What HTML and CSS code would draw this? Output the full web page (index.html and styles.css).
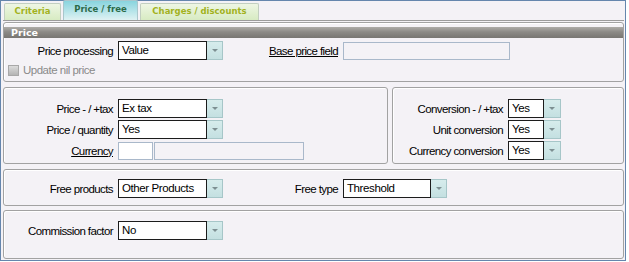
FILE: index.html
```html
<!DOCTYPE html>
<html lang="en">
<head>
    <meta charset="UTF-8">
    <meta name="viewport" content="width=device-width, initial-scale=1.0">
    <title>Price / free</title>
    <link rel="stylesheet" href="styles.css">
</head>
<body>
    <div class="window">
        <div class="tabs">
            <div class="tab t-criteria">Criteria</div>
            <div class="tab active">Price / free</div>
            <div class="tab t-charges">Charges / discounts</div>
        </div>

        <div class="panel price">
            <div class="panel-title">Price</div>
            <div class="row">
                <span class="lbl">Price processing</span>
                <div class="combo"><span class="val">Value</span><span class="btn"></span></div>
                <span class="lbl lbl2 link">Base price field</span>
                <span class="field base"></span>
            </div>
            <div class="check"><span class="box"></span>Update nil price</div>
        </div>

        <div class="split">
            <div class="panel left">
                <div class="row">
                    <span class="lbl">Price - / +tax</span>
                    <div class="combo"><span class="val">Ex tax</span><span class="btn"></span></div>
                </div>
                <div class="row">
                    <span class="lbl">Price / quantity</span>
                    <div class="combo"><span class="val">Yes</span><span class="btn"></span></div>
                </div>
                <div class="row">
                    <span class="lbl link">Currency</span>
                    <span class="field code"></span>
                    <span class="field name"></span>
                </div>
            </div>
            <div class="panel right">
                <div class="row">
                    <span class="lbl">Conversion - / +tax</span>
                    <div class="combo small"><span class="val">Yes</span><span class="btn"></span></div>
                </div>
                <div class="row">
                    <span class="lbl">Unit conversion</span>
                    <div class="combo small"><span class="val">Yes</span><span class="btn"></span></div>
                </div>
                <div class="row">
                    <span class="lbl">Currency conversion</span>
                    <div class="combo small"><span class="val">Yes</span><span class="btn"></span></div>
                </div>
            </div>
        </div>

        <div class="panel free">
            <div class="row">
                <span class="lbl">Free products</span>
                <div class="combo"><span class="val">Other Products</span><span class="btn"></span></div>
                <span class="lbl lbl2">Free type</span>
                <div class="combo type"><span class="val">Threshold</span><span class="btn"></span></div>
            </div>
        </div>

        <div class="panel commission">
            <div class="row">
                <span class="lbl">Commission factor</span>
                <div class="combo"><span class="val">No</span><span class="btn"></span></div>
            </div>
        </div>
    </div>
</body>
</html>
```

FILE: styles.css
```css
body {
    margin: 0;
    background-color: #ffffff;
    font-family: "Liberation Sans", Arial, sans-serif;
    font-size: 11px;
    color: #000000;
}
.window {
    width: 621px;
    height: 259px;
    padding: 0 1px 0 2px;
    border: 1px solid #6586ad;
    background-color: #f4f2f6;
    display: flex;
    flex-direction: column;
}
.tabs {
    height: 19px;
    display: flex;
    align-items: flex-end;
    gap: 2px;
    padding-left: 1px;
    border-bottom: 1px solid #9c9c9c;
}
.tab {
    height: 16px;
    line-height: 15px;
    text-align: center;
    font-family: "DejaVu Sans", Verdana, sans-serif;
    font-size: 8.5px;
    font-weight: bold;
    color: #a2b21e;
    background: linear-gradient(#eef6e4, #d7ebc2);
    border: 1px solid #c2cfc0;
    border-bottom: none;
    border-radius: 2px 2px 0 0;
}
.t-criteria {
    width: 55px;
}
.t-charges {
    width: 117px;
}
.tab.active {
    width: 73px;
    height: 19px;
    line-height: 17px;
    color: #2a6a48;
    background: linear-gradient(#88d4de, #dff2f3);
    border-color: #a9c6cc;
}
.panel {
    border: 1px solid #a2a2a2;
    border-radius: 3px;
    box-shadow: inset 1px 1px 0 #ffffff;
    background-color: #f4f2f6;
}
.price {
    height: 58px;
    margin-top: 1px;
}
.panel-title {
    height: 11px;
    line-height: 11px;
    margin-top: 4px;
    padding-left: 7px;
    font-family: "DejaVu Sans", Verdana, sans-serif;
    font-size: 9.5px;
    font-weight: bold;
    color: #ffffff;
    background: linear-gradient(#aeaca8, #8c8a86 45%, #787672);
}
.row {
    display: flex;
    align-items: center;
    height: 19px;
    gap: 5px;
}
.price .row {
    margin-top: 3px;
}
.lbl {
    width: 109px;
    flex: none;
    text-align: right;
    font-size: 11.5px;
    letter-spacing: -0.6px;
    white-space: nowrap;
}
.lbl2 {
    width: 110px;
}
.right .lbl {
    width: 110px;
}
.link {
    text-decoration: underline;
}
.combo {
    width: 105px;
    height: 19px;
    flex: none;
    display: flex;
}
.combo .val {
    flex: 1;
    border: 1px solid #1c1c1c;
    background-color: #ffffff;
    padding-left: 3px;
    line-height: 17px;
    font-size: 11.5px;
    letter-spacing: -0.4px;
    white-space: nowrap;
    overflow: hidden;
}
.combo .btn {
    width: 15px;
    flex: none;
    border: 1px solid #a6c6c8;
    border-left: none;
    background: linear-gradient(#d6ecec, #c4e0e1);
    position: relative;
}
.combo .btn::after {
    content: "";
    position: absolute;
    left: 5px;
    top: 7px;
    border-left: 3px solid transparent;
    border-right: 3px solid transparent;
    border-top: 3px solid #7d8f92;
}
.combo.small {
    width: 53px;
}
.combo.small .btn {
    width: 16px;
}
.combo.type {
    width: 104px;
}
.field {
    height: 16px;
    border: 1px solid #a9b8ca;
    background-color: #f4f2f6;
    flex: none;
}
.field.base {
    width: 165px;
}
.field.code {
    width: 33px;
    background-color: #ffffff;
    margin-right: -5px;
}
.field.name {
    width: 148px;
    margin-left: 1px;
}
.check {
    display: flex;
    align-items: center;
    gap: 4px;
    margin-top: 4px;
    padding-left: 4px;
    height: 12px;
    color: #8a8a8a;
    font-size: 11.5px;
    letter-spacing: -0.5px;
}
.check .box {
    width: 9px;
    height: 9px;
    border: 1px solid #a8a8a8;
    background: linear-gradient(#dcdcdc, #b4b4b4);
}
.split {
    display: flex;
    gap: 4px;
    margin-top: 5px;
}
.left, .right {
    height: 64px;
    padding-top: 11px;
    display: flex;
    flex-direction: column;
    gap: 2px;
}
.left {
    width: 383px;
}
.right {
    flex: 1;
}
.free {
    height: 26px;
    margin-top: 5px;
    padding-top: 9px;
}
.commission {
    flex: 1;
    margin-top: 4px;
    margin-bottom: 1px;
    padding-top: 10px;
}
```
